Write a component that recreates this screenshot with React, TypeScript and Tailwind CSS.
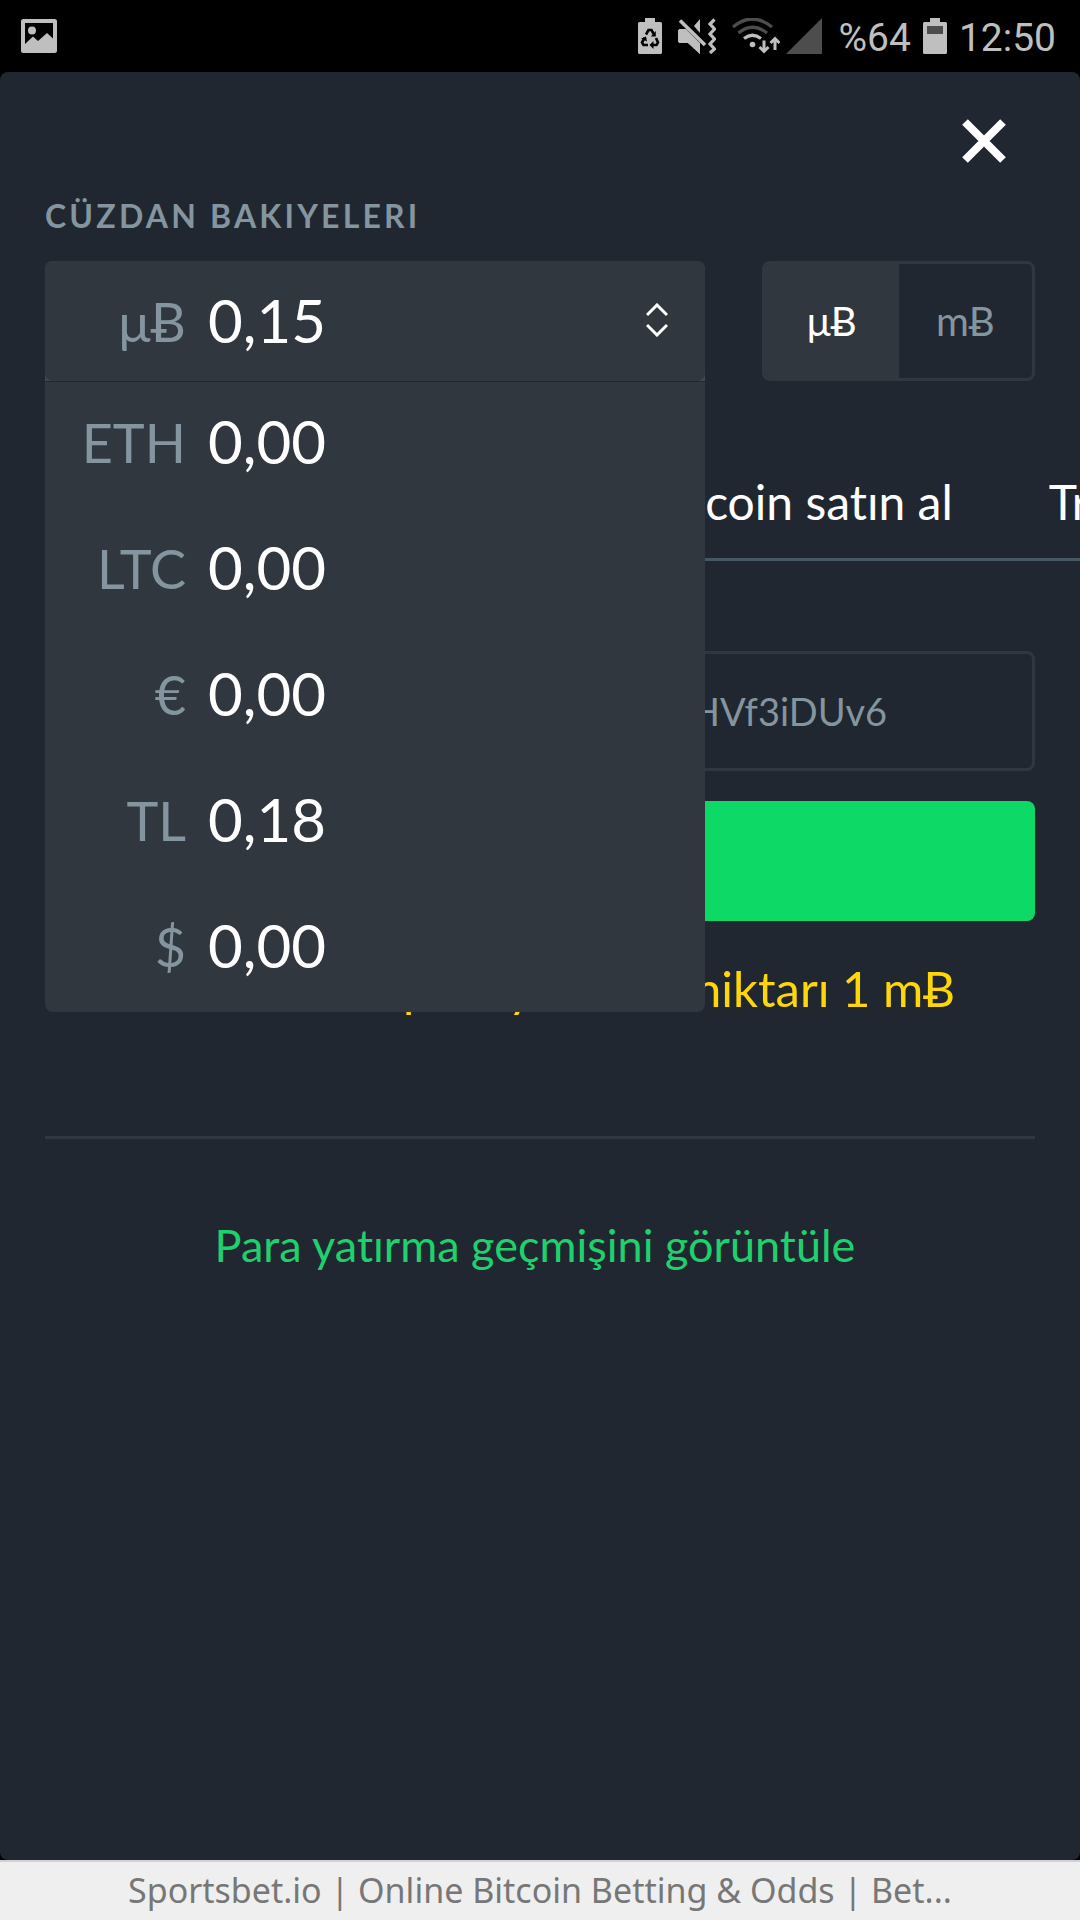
import { useState } from 'react';

const balances = [
  { code: 'μɃ', amount: '0,15' },
  { code: 'ETH', amount: '0,00' },
  { code: 'LTC', amount: '0,00' },
  { code: '€', amount: '0,00' },
  { code: 'TL', amount: '0,18' },
  { code: '$', amount: '0,00' },
];

const tabs = ['Bitcoin', 'Bitcoin satın al', 'Transfer'];

function PictureIcon() {
  return (
    <svg viewBox="0 0 36 34" className="w-9 h-[34px]" fill="#bfbfbf" aria-hidden="true">
      <path
        fillRule="evenodd"
        d="M2.500 0h31a2.500 2.500 0 0 1 2.500 2.500v29a2.500 2.500 0 0 1-2.500 2.500h-31A2.500 2.500 0 0 1 0 31.500v-29A2.500 2.500 0 0 1 2.500 0ZM4 4v21l8-7.500 5 4.500 9-8 6 5.500V4Z"
      />
      <circle cx="11" cy="11.500" r="4" />
    </svg>
  );
}

function BatterySaverIcon() {
  return (
    <svg viewBox="0 0 24 36" className="w-6 h-9" fill="#bfbfbf" aria-hidden="true">
      <path d="M7 0h10v4h5.500A1.500 1.500 0 0 1 24 5.500v29a1.500 1.500 0 0 1-1.500 1.500h-21A1.500 1.500 0 0 1 0 34.500v-29A1.500 1.500 0 0 1 1.500 4H7Z" />
      <g fill="none" stroke="#000" strokeWidth="2.600">
        <path d="M8 16.500 10.500 12h3l2.500 4.500" />
        <path d="M18 20l2 4.500-1.500 2.500H14" />
        <path d="M10 27H5.500L4 24.500 6.500 20" />
      </g>
      <path fill="#000" d="M17.800 13v5.500h-5ZM15.500 23v8l-4-4ZM3 20.500l5-2 1 5Z" />
    </svg>
  );
}

function MuteIcon() {
  return (
    <svg viewBox="0 0 38 36" className="w-[38px] h-9" aria-hidden="true">
      <path fill="#bfbfbf" d="M0 12.500 1.500 11H8l14 14v11L10 25H1.500L0 23.500ZM22 1v14l-6-7Z" />
      <path d="M3 3l24 24" stroke="#000" strokeWidth="7" />
      <path fill="#bfbfbf" d="M0 12.500 1.500 11H8l14 14v11L10 25H1.500L0 23.500Z" />
      <path d="M2 2.500l25 24.500" stroke="#bfbfbf" strokeWidth="3.600" />
      <path
        d="M36.500 1.500 32 6l4.500 5-4.500 5 4.500 5-4.500 5 4.500 5-4.500 4"
        fill="none"
        stroke="#bfbfbf"
        strokeWidth="3.200"
      />
    </svg>
  );
}

function WifiIcon() {
  return (
    <svg viewBox="0 0 48 36" className="w-12 h-9" fill="none" aria-hidden="true">
      <path d="M1 9Q20-7 40 9M6.500 15Q20.500 3.500 35 15" stroke="#4d4d4d" strokeWidth="3.200" />
      <path d="M12 20.500q8.500-6.500 17 0" stroke="#bfbfbf" strokeWidth="3.200" />
      <circle cx="20.500" cy="26.500" r="2.800" fill="#bfbfbf" />
      <g stroke="#bfbfbf" strokeWidth="3">
        <path d="M32 22.500v11M27.500 29l4.500 4.500 4.500-4.500" />
        <path d="M43 32V21M38.500 25l4.500-4.500 4.500 4.500" />
      </g>
    </svg>
  );
}

function StatusBar() {
  return (
    <header className="flex h-[72px] items-center justify-between bg-black pl-[21px] pr-6 font-[Roboto,sans-serif] text-[39px] text-[#bfbfbf]">
      <PictureIcon />
      <div className="flex items-center gap-4">
        <BatterySaverIcon />
        <MuteIcon />
        <WifiIcon />
        <svg viewBox="0 0 36 36" className="-ml-2.5 size-9" aria-hidden="true">
          <path d="M36 0v36H0Z" fill="#4d4d4d" />
        </svg>
        <span className="pt-1 leading-10">%64</span>
        <svg viewBox="0 0 24 36" className="-ml-1 w-6 h-9" aria-hidden="true">
          <path
            fill="#bfbfbf"
            d="M7 0h10v4h5.500A1.500 1.500 0 0 1 24 5.500v29a1.500 1.500 0 0 1-1.500 1.500h-21A1.500 1.500 0 0 1 0 34.500v-29A1.500 1.500 0 0 1 1.500 4H7Z"
          />
          <path d="M4 8h16v8H4Z" fill="#4d4d4d" />
        </svg>
        <time className="-ml-1 pt-1 leading-10">12:50</time>
      </div>
    </header>
  );
}

function WalletSelect() {
  const [selected, setSelected] = useState(0);

  return (
    <div className="relative z-10 h-[120px] w-[660px] rounded-t-lg bg-[#394c56]">
      <div className="relative flex h-full items-center rounded-lg bg-[#31373f] pb-0.5 pl-[45px]">
        <label htmlFor="wallet" className="w-24 shrink-0 pt-1 text-right text-[54px] leading-[72px] text-[#84959f]">
          {balances[selected].code}
        </label>
        <select
          id="wallet"
          value={selected}
          onChange={(e) => setSelected(Number(e.target.value))}
          className="h-full flex-1 appearance-none pl-[22px] text-[60px] leading-[72px] text-white outline-none"
        >
          {balances.map((b, i) => (
            <option key={b.code} value={i}>
              {b.amount}
            </option>
          ))}
        </select>
        <svg
          viewBox="0 0 22 34"
          className="pointer-events-none absolute right-[37px] h-[34px] w-[22px]"
          fill="none"
          stroke="#fff"
          strokeWidth="3"
          aria-hidden="true"
        >
          <path d="M1 12 11 2l10 10M1 22l10 10 10-10" />
        </svg>
      </div>
      <ul className="absolute inset-x-0 top-full mt-px rounded-b-lg bg-[#31373f]">
        {balances.slice(1).map((b, i) => (
          <li key={b.code}>
            <button
              type="button"
              onClick={() => setSelected(i + 1)}
              className="flex h-[126px] w-full items-center pb-2 pl-[45px] text-left"
            >
              <span className="flex w-24 shrink-0 justify-end pt-1 text-[54px] leading-[72px] text-[#84959f]">
                {b.code}
              </span>
              <span className="pl-[22px] text-[60px] leading-[72px] text-white">{b.amount}</span>
            </button>
          </li>
        ))}
      </ul>
    </div>
  );
}

function UnitToggle() {
  return (
    <div className="flex h-[120px] w-[273px] overflow-hidden rounded-lg border-3 border-[#31373f] text-[40px]">
      <button type="button" aria-pressed="true" className="flex-1 bg-[#31373f] text-white">
        μɃ
      </button>
      <button type="button" aria-pressed="false" className="flex-1 text-[#84959f]">
        mɃ
      </button>
    </div>
  );
}

export default function App() {
  return (
    <div className="flex min-h-screen flex-col bg-black font-[Lato,'Noto_Sans',sans-serif] [font-variant-ligatures:none]">
      <StatusBar />
      <main className="flex-1 rounded-lg bg-[#202730] px-[45px]">
        <div className="flex justify-end pt-[39px] pr-[21px]">
          <button type="button" aria-label="Kapat" className="flex size-[60px] items-center justify-center">
            <svg viewBox="0 0 44 44" className="size-11" stroke="#fff" strokeWidth="8" aria-hidden="true">
              <path d="M3 3l38 38M41 3 3 41" />
            </svg>
          </button>
        </div>

        <h1 className="mt-[25px] text-[32px] leading-10 font-bold tracking-widest text-[#84959f]">CÜZDAN BAKIYELERI</h1>

        <div className="mt-[25px] flex justify-between">
          <WalletSelect />
          <UnitToggle />
        </div>

        <nav className="-mr-[45px] mt-16 flex justify-start gap-24 overflow-hidden border-b-3 border-[#455866]">
          {tabs.map((tab) => (
            <button
              key={tab}
              type="button"
              className="h-[113px] shrink-0 text-[48px] whitespace-nowrap text-white first:w-[505px]"
            >
              {tab}
            </button>
          ))}
        </nav>

        <input
          readOnly
          aria-label="Bitcoin adresi"
          value="3Qk7rLfR8tYPi5LcB2fGaJeK9HVf3iDUv6"
          className="mt-[90px] block h-[120px] w-full rounded-lg border-3 border-[#31373f] text-center text-[38px] text-[#84959f]"
        />
        <button type="button" aria-label="Kopyala" className="mt-[30px] block h-[120px] w-full rounded-lg bg-[#0dd966]" />

        <p className="mt-[37px] text-center text-[49px] leading-[60px] text-[#ffd60a]">
          Kabul edilen para yatırma miktarı 1 mɃ
        </p>

        <hr className="mt-[118px] border-t-3 border-[#31373f]" />

        <p className="mt-[76px] pr-2.5 text-center">
          <a href="#history" className="text-[45px] leading-[60px] text-[#1fd16c]">
            Para yatırma geçmişini görüntüle
          </a>
        </p>
      </main>
      <footer className="h-[60px] border-t-2 border-[#d0d2d4] bg-[#efefef] text-center font-['Noto_Sans',sans-serif] text-[34px] leading-[56px] text-[#777]">
        Sportsbet.io | Online Bitcoin Betting &amp; Odds | Bet...
      </footer>
    </div>
  );
}
